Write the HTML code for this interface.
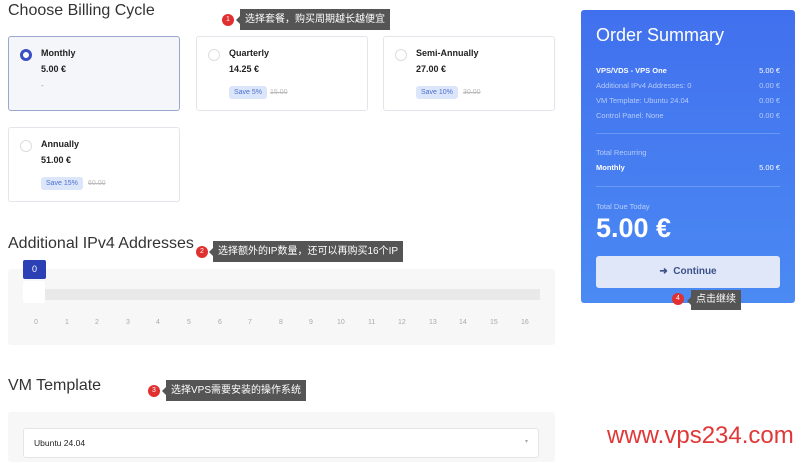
<!DOCTYPE html>
<html><head><meta charset="utf-8"><style>
*{margin:0;padding:0;box-sizing:border-box}
body{width:800px;height:454px;overflow:hidden;background:#fff;font-family:"Liberation Sans","Noto Sans CJK SC",sans-serif;color:#222;position:relative}
.a{position:absolute}
.h{font-size:16px;color:#333;font-weight:300;white-space:nowrap}
.card{position:absolute;width:172px;height:75px;background:#fff;border:1px solid #e3e5ea;border-radius:3px}
.card.sel{background:#f5f6fa;border-color:#9aa8cf}
.rad{position:absolute;left:11px;top:12px;width:12px;height:12px;border-radius:50%;border:1px solid #ddd;background:#fff}
.sel .rad{border:3px solid #3b4fc4}
.t1{position:absolute;left:32px;top:11px;font-size:9px;font-weight:bold}
.t2{position:absolute;left:32px;top:27px;font-size:9px;font-weight:bold}
.badge{position:absolute;left:32px;top:49px;background:#dce6fb;color:#4a6fd0;font-size:7px;padding:3px 5px;border-radius:3px}
.old{position:absolute;left:73px;top:52px;font-size:7px;color:#bbb;text-decoration:line-through}
.dot{position:absolute;width:12px;height:12px;border-radius:50%;background:#e03030;color:#fff;font-size:7px;text-align:center;line-height:12px}
.tip{position:absolute;background:#555;color:#fff;font-size:10px;padding:0 5px;white-space:nowrap;line-height:21px}
.tip:before{content:"";position:absolute;left:-4px;top:7px;border:4px solid transparent;border-right-color:#555;border-left:0}
.sm{position:absolute;left:15px;right:15px;font-size:7.5px;color:rgba(255,255,255,.6)}
.sm span{float:right}
.w{color:#fff;font-weight:bold}
.lab{position:absolute;top:319px;font-size:7px;color:#aaa}
</style></head><body>
<div class="a h" style="left:8px;top:2px">Choose Billing Cycle</div>
<div class="dot" style="left:222px;top:14px">1</div>
<div class="tip" style="left:240px;top:9px">选择套餐，购买周期越长越便宜</div>

<div class="card sel" style="left:8px;top:36px"><div class="rad"></div><div class="t1">Monthly</div><div class="t2">5.00 €</div><div class="a" style="left:32px;top:44px;font-size:8px;color:#999">-</div></div>
<div class="card" style="left:196px;top:36px"><div class="rad"></div><div class="t1">Quarterly</div><div class="t2">14.25 €</div><div class="badge">Save 5%</div><div class="old">15.00</div></div>
<div class="card" style="left:383px;top:36px"><div class="rad"></div><div class="t1">Semi-Annually</div><div class="t2">27.00 €</div><div class="badge">Save 10%</div><div class="old" style="left:79px">30.00</div></div>
<div class="card" style="left:8px;top:127px"><div class="rad"></div><div class="t1">Annually</div><div class="t2">51.00 €</div><div class="badge">Save 15%</div><div class="old" style="left:79px">60.00</div></div>

<div class="a h" style="left:8px;top:235px">Additional IPv4 Addresses</div>
<div class="dot" style="left:196px;top:246px">2</div>
<div class="tip" style="left:213px;top:241px">选择额外的IP数量，还可以再购买16个IP</div>

<div class="a" style="left:8px;top:269px;width:547px;height:76px;background:#f7f7f7;border-radius:3px"></div>
<div class="a" style="left:45px;top:289px;width:495px;height:11px;background:#e9e9e9"></div>
<div class="a" style="left:23px;top:281px;width:22px;height:22px;background:#fff;border-radius:2px"></div>
<div class="a" style="left:23px;top:260px;width:23px;height:19px;background:#2a40b4;color:#fff;font-size:9px;text-align:center;line-height:19px;border-radius:2px">0</div>
<div class="lab" style="left:34px">0</div><div class="lab" style="left:65px">1</div><div class="lab" style="left:95px">2</div><div class="lab" style="left:126px">3</div><div class="lab" style="left:156px">4</div><div class="lab" style="left:187px">5</div><div class="lab" style="left:218px">6</div><div class="lab" style="left:248px">7</div><div class="lab" style="left:279px">8</div><div class="lab" style="left:309px">9</div><div class="lab" style="left:337px">10</div><div class="lab" style="left:368px">11</div><div class="lab" style="left:398px">12</div><div class="lab" style="left:429px">13</div><div class="lab" style="left:459px">14</div><div class="lab" style="left:490px">15</div><div class="lab" style="left:521px">16</div>

<div class="a h" style="left:8px;top:377px">VM Template</div>
<div class="dot" style="left:148px;top:385px">3</div>
<div class="tip" style="left:166px;top:380px">选择VPS需要安装的操作系统</div>
<div class="a" style="left:8px;top:412px;width:547px;height:50px;background:#f7f7f7;border-radius:3px"></div>
<div class="a" style="left:23px;top:428px;width:516px;height:30px;background:#fff;border:1px solid #e5e5e5;border-radius:3px;font-size:8.5px;padding:9px 10px">Ubuntu 24.04<span style="float:right;color:#aaa;font-size:6px">▾</span></div>

<div class="a" style="left:581px;top:10px;width:214px;height:293px;background:linear-gradient(#4170ee,#4b8af3);border-radius:3px">
<div class="a" style="left:15px;top:15px;font-size:18px;color:#fff;font-weight:300">Order Summary</div>
<div class="sm w" style="top:56px">VPS/VDS - VPS One<span style="font-weight:normal">5.00 €</span></div>
<div class="sm" style="top:71px">Additional IPv4 Addresses: 0<span>0.00 €</span></div>
<div class="sm" style="top:86px">VM Template: Ubuntu 24.04<span>0.00 €</span></div>
<div class="sm" style="top:101px">Control Panel: None<span>0.00 €</span></div>
<div class="a" style="left:15px;right:15px;top:123px;height:1px;background:rgba(255,255,255,.2)"></div>
<div class="sm" style="top:138px">Total Recurring</div>
<div class="sm w" style="top:153px">Monthly<span style="font-weight:normal">5.00 €</span></div>
<div class="a" style="left:15px;right:15px;top:176px;height:1px;background:rgba(255,255,255,.2)"></div>
<div class="sm" style="top:192px">Total Due Today</div>
<div class="a" style="left:15px;top:203px;font-size:27px;font-weight:bold;color:#fff">5.00 €</div>
<div class="a" style="left:15px;top:246px;width:184px;height:32px;background:#e0e7f8;border-radius:3px;color:#3d5189;font-size:10px;font-weight:bold;text-align:center;line-height:32px">➜&nbsp; Continue</div>
</div>
<div class="dot" style="left:672px;top:293px">4</div>
<div class="tip" style="left:691px;top:290px;line-height:20px">点击继续</div>

<div class="a" style="left:607px;top:422px;font-size:24px;color:#e03838">www.vps234.com</div>
</body></html>
